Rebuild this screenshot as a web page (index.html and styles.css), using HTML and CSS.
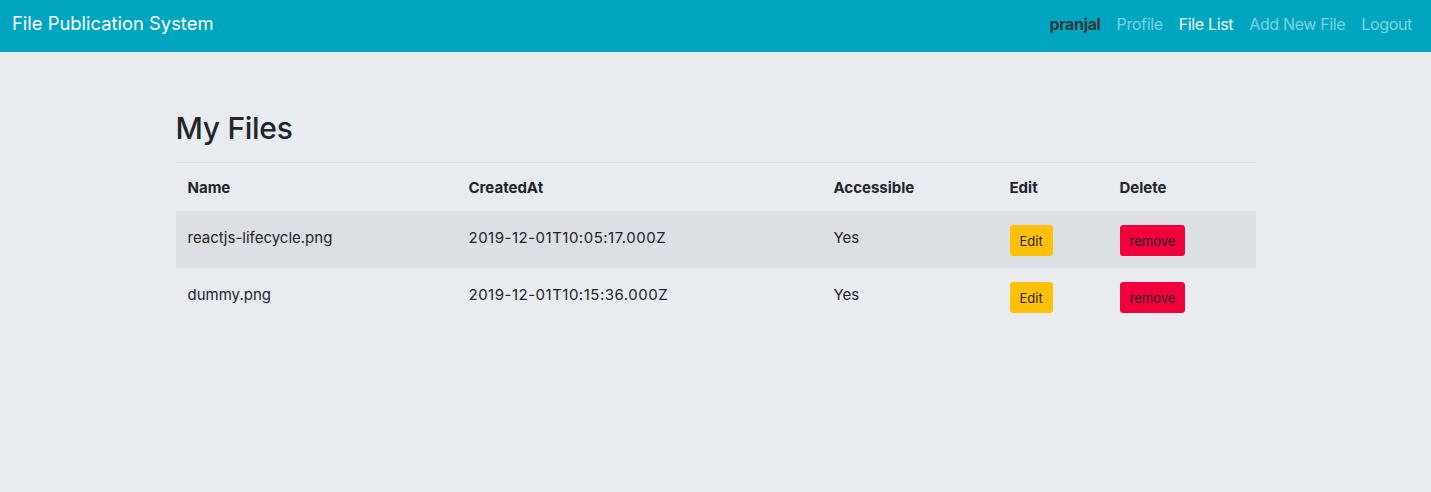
FILE: index.html
```html
<!DOCTYPE html>
<html lang="en">
<head>
<meta charset="utf-8">
<title>File Publication System</title>
<link rel="stylesheet" href="styles.css">
</head>
<body>
<nav class="navbar">
  <a class="brand" href="#">File Publication System</a>
  <ul class="nav-links">
    <li class="user">pranjal</li>
    <li><a class="link" href="#">Profile</a></li>
    <li><a class="link active" href="#">File List</a></li>
    <li><a class="link" href="#">Add New File</a></li>
    <li><a class="link" href="#">Logout</a></li>
  </ul>
</nav>
<main class="container">
  <h2 class="title">My Files</h2>
  <table class="files">
    <colgroup>
      <col class="c-name"><col class="c-created"><col class="c-acc"><col class="c-edit"><col class="c-del">
    </colgroup>
    <thead>
      <tr><th>Name</th><th>CreatedAt</th><th>Accessible</th><th>Edit</th><th>Delete</th></tr>
    </thead>
    <tbody>
      <tr class="striped">
        <td>reactjs-lifecycle.png</td>
        <td class="date">2019-12-01T10:05:17.000Z</td>
        <td>Yes</td>
        <td><button class="btn btn-edit">Edit</button></td>
        <td><button class="btn btn-remove">remove</button></td>
      </tr>
      <tr>
        <td>dummy.png</td>
        <td class="date">2019-12-01T10:15:36.000Z</td>
        <td>Yes</td>
        <td><button class="btn btn-edit">Edit</button></td>
        <td><button class="btn btn-remove">remove</button></td>
      </tr>
    </tbody>
  </table>
</main>
</body>
</html>
```
FILE: styles.css
```css
* { box-sizing: border-box; }
html, body { height: 100%; }
body {
  margin: 0;
  background: #e8ebf0;
  font-family: Inter, "Helvetica Neue", Arial, sans-serif;
  font-size: 16px;
  line-height: 1.5;
  color: #212529;
}
.navbar {
  height: 52px;
  background: #00a6c0;
  display: flex;
  align-items: center;
  justify-content: space-between;
  padding: 0 19px 4px 12px;
}
.brand {
  color: #fff;
  font-size: 18.4px;
  text-decoration: none;
}
.nav-links {
  list-style: none;
  margin: 0;
  padding: 0;
  display: flex;
  gap: 16px;
  font-size: 16px;
  letter-spacing: -0.35px;
}
.user {
  font-weight: 700;
  color: #343a40;
}
.link {
  color: rgba(255,255,255,0.5);
  text-decoration: none;
}
.link.active { color: #f2fbfc; }
.container {
  width: 1080px;
  margin: 0 auto;
  padding-top: 57px;
}
.title {
  margin: 0;
  font-size: 30px;
  font-weight: 500;
  line-height: 38px;
  letter-spacing: -0.3px;
}
.files {
  margin-top: 15px;
  width: 100%;
  border-collapse: collapse;
  border-top: 1px solid #d9dde2;
}
.c-name { width: 281px; }
.c-created { width: 365px; }
.c-acc { width: 176px; }
.c-edit { width: 110px; }
.c-del { width: 148px; }
th, td {
  text-align: left;
  vertical-align: top;
}
th {
  font-weight: 700;
  font-size: 15px;
  height: 48px;
  padding: 14px 12px 10px;
}
td {
  font-size: 15px;
  height: 57px;
  padding: 16px 12px 8px;
}
.date { letter-spacing: 0.5px; }
.striped { background: #dcdfe4; }
.btn {
  font-family: inherit;
  font-size: 13px;
  line-height: 20px;
  padding: 5px 9px 4px;
  border: 1px solid transparent;
  border-radius: 3px;
  color: #212529;
  margin-top: -2px;
  cursor: pointer;
  letter-spacing: 0;
}
.btn-edit { background: #ffc107; border-color: #ffc107; }
.btn-remove { background: #f1003b; border-color: #f1003b; }
```
